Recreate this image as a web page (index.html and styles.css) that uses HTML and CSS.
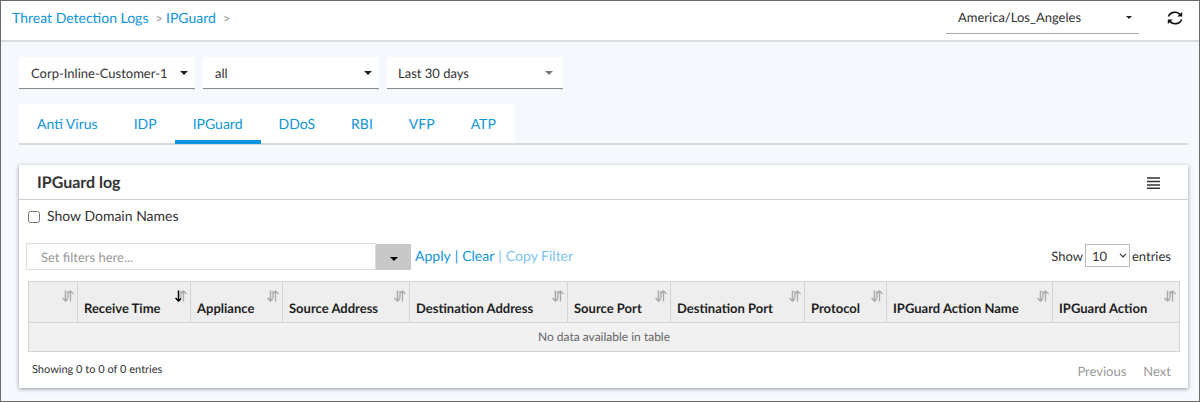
FILE: index.html
```html
<!DOCTYPE html>
<html lang="en">
<head>
<meta charset="utf-8">
<title>Threat Detection Logs - IPGuard</title>
<link rel="stylesheet" href="styles.css">
</head>
<body>
<svg class="sprite" aria-hidden="true">
  <symbol id="sort" viewBox="0 0 12 12">
    <path class="up" d="M8.5 11.5V1.5M6.5 3.2L8.5 1L11.5 4M6 1V8"/>
    <path class="down" d="M3.5 0.5V10.5M0.5 8L3.5 11L6 8.6"/>
  </symbol>
</svg>
<header class="topbar">
  <nav class="crumbs" aria-label="Breadcrumb">
    <a href="#">Threat Detection Logs</a><span class="sep">&gt;</span><a href="#">IPGuard</a><span class="sep last">&gt;</span>
  </nav>
  <div class="tools">
    <div class="pick zone"><select aria-label="Time zone"><option>America/Los_Angeles</option></select></div>
    <button class="refresh" type="button" aria-label="Refresh">
      <svg viewBox="0 0 16 16" width="16" height="16" fill="none" stroke="#111" stroke-width="1.6">
        <path d="M1.4 6.6A6.7 6 0 0 1 13.4 5"/><path d="M14.6 9.4A6.7 6 0 0 1 2.6 11"/>
        <path d="M15.2 2V6.6H10.2Z" fill="#111" stroke="none"/><path d="M0.8 14V9.4H5.8Z" fill="#111" stroke="none"/>
      </svg>
    </button>
  </div>
</header>
<main class="content">
  <div class="filters">
    <div class="pick"><select aria-label="Organization"><option>Corp-Inline-Customer-1</option></select></div>
    <div class="pick"><select aria-label="Appliance"><option>all</option></select></div>
    <div class="pick soft"><select aria-label="Time range"><option>Last 30 days</option></select></div>
  </div>
  <nav class="tabs" aria-label="Log types">
    <a href="#">Anti Virus</a><a href="#">IDP</a><a href="#" class="active" aria-current="page">IPGuard</a><a href="#">DDoS</a><a href="#">RBI</a><a href="#">VFP</a><a href="#">ATP</a>
  </nav>
  <section class="panel">
    <div class="panel-head">
      <h1>IPGuard log</h1>
      <button class="menu" type="button" aria-label="Menu">
        <svg viewBox="0 0 13 12" width="13" height="12" fill="none" stroke="#333" stroke-width="1.4"><path d="M0 1H13M0 4.5H13M0 8H13M0 11.3H13"/></svg>
      </button>
    </div>
    <div class="panel-body">
      <label class="domains"><input type="checkbox">Show Domain Names</label>
      <div class="toolbar">
        <input class="query" type="text" placeholder="Set filters here..." aria-label="Filters">
        <button class="drop" type="button" aria-label="Filter options"></button>
        <div class="actions"><a href="#">Apply</a><span>|</span><a href="#">Clear</a><span class="faded">|</span><a href="#" class="faded">Copy Filter</a></div>
        <label class="length">Show <span class="count"><select><option>10</option></select><svg viewBox="0 0 8 5" width="8" height="5" fill="none" stroke="#333" stroke-width="1.1"><path d="M1 0.8L4 3.9L7 0.8"/></svg></span> entries</label>
      </div>
      <table class="log">
        <colgroup><col class="c-pick"><col class="c-time"><col class="c-appl"><col class="c-src"><col class="c-dst"><col class="c-sport"><col class="c-dport"><col class="c-proto"><col class="c-name"><col class="c-act"></colgroup>
        <thead><tr>
          <th><div><svg><use href="#sort"/></svg><span></span></div></th>
          <th><div class="sorted"><svg><use href="#sort"/></svg><span>Receive Time</span></div></th>
          <th><div><svg><use href="#sort"/></svg><span>Appliance</span></div></th>
          <th><div><svg><use href="#sort"/></svg><span>Source Address</span></div></th>
          <th><div><svg><use href="#sort"/></svg><span>Destination Address</span></div></th>
          <th><div><svg><use href="#sort"/></svg><span>Source Port</span></div></th>
          <th><div><svg><use href="#sort"/></svg><span>Destination Port</span></div></th>
          <th><div><svg><use href="#sort"/></svg><span>Protocol</span></div></th>
          <th><div><svg><use href="#sort"/></svg><span>IPGuard Action Name</span></div></th>
          <th><div><svg><use href="#sort"/></svg><span>IPGuard Action</span></div></th>
        </tr></thead>
        <tbody><tr><td colspan="10">No data available in table</td></tr></tbody>
      </table>
      <div class="foot">
        <span>Showing 0 to 0 of 0 entries</span>
        <div class="pager"><button type="button">Previous</button><button type="button">Next</button></div>
      </div>
    </div>
  </section>
</main>
</body>
</html>
```

FILE: styles.css
```css
* { box-sizing: border-box; }
body {
  margin: 0;
  min-height: 100vh;
  border: 1px solid #6b6b6b;
  background: #f5f9fd;
  color: #333;
  font: 14px/20px Lato, "Liberation Sans", sans-serif;
  text-rendering: geometricPrecision;
}
select, input, button { text-rendering: inherit; }
a { color: #0d94dc; text-decoration: none; }
button { border: 0; padding: 0; background: none; font: inherit; }
.sprite { display: none; }

.topbar {
  display: flex;
  justify-content: space-between;
  height: 41px;
  padding: 0 16px 0 11px;
  border-bottom: 2px solid #dcdde0;
  background: #fff;
}
.crumbs { display: flex; align-items: center; font-size: 14px; padding-bottom: 5px; }
.sep { color: #999; font-size: 13px; padding: 0 3px 0 7px; }
.tools { display: flex; align-items: flex-start; gap: 28px; }
.refresh { display: flex; padding-top: 9px; }

.pick { display: grid; align-items: center; width: 176px; height: 32px; background: #fff; border-bottom: 1px solid #8c8c8c; }
.pick select {
  grid-area: 1 / 1;
  appearance: none;
  width: 100%;
  height: 31px;
  border: 0;
  padding: 0 12px;
  background: transparent;
  color: #333;
  font: 13px/20px Lato, "Liberation Sans", sans-serif;
}
.pick::after {
  content: "";
  grid-area: 1 / 1;
  justify-self: end;
  margin-right: 7px;
  border: 4px solid transparent;
  border-top-color: #222;
  border-bottom: 0;
  pointer-events: none;
}
.pick.soft::after { margin-right: 10px; border-top-color: #777; }
.pick.soft select { padding-left: 11px; }
.zone { width: 193px; height: 33px; border-bottom-color: #aaa; }
.zone::after { border-width: 3px; border-bottom: 0; }

.content { padding: 15px 11px 13px 18px; }
.filters { display: flex; gap: 8px; }
.tabs {
  display: flex;
  margin-top: 15px;
  height: 41px;
  border-bottom: 2px solid #d9dadc;
}
.tabs a { height: 39px; padding: 10px 18px; background: #fff; }
.tabs a.active { height: 40px; border-bottom: 4px solid #0d94dc; }

.panel { margin-top: 20px; background: #fff; box-shadow: 0 1px 4px rgba(0, 0, 0, 0.4); }
.panel-head {
  display: flex;
  align-items: center;
  justify-content: space-between;
  height: 35px;
  padding: 2px 28px 0 18px;
  border-bottom: 1px solid #cfcfcf;
}
h1 { margin: 0; font-size: 16px; line-height: 20px; font-weight: 700; }
.menu { display: flex; }
.panel-body { padding: 6px 9px 7px; }
.domains { display: flex; align-items: center; gap: 7px; }
.domains input { margin: 2px 0 0; width: 12px; height: 12px; }
.toolbar { display: flex; align-items: center; margin: 17px 0 11px -2px; }
.query {
  width: 350px;
  height: 27px;
  border: 1px solid #ddd;
  padding: 0 14px;
  font: 13px/20px Lato, "Liberation Sans", sans-serif;
}
.query::placeholder { color: #999; opacity: 1; }
.drop { display: grid; place-items: center; width: 35px; height: 26px; padding-top: 4px; background: #c8c8c8; }
.drop::after { content: ""; border: 4px solid transparent; border-top-color: #000; border-bottom: 0; }
.actions { display: flex; gap: 4px; padding: 0 0 2px 4px; color: #0d94dc; }
.actions .faded { color: #7cc3ec; }
.length { display: flex; align-items: center; gap: 2px; margin-left: auto; padding: 0 8px 2px 0; font-size: 13px; }
.count { display: grid; align-items: center; }
.count select {
  grid-area: 1 / 1;
  appearance: none;
  width: 45px;
  height: 23px;
  border: 1px solid #bbb;
  padding: 0 6px;
  background: #fff;
  color: #333;
  font: 13px/20px Lato, "Liberation Sans", sans-serif;
}
.count svg { grid-area: 1 / 1; justify-self: end; margin-right: 3px; pointer-events: none; }

.log { width: 100%; table-layout: fixed; border-collapse: collapse; }
.log th, .log td { border: 1px solid #d5d5d5; padding: 0; }
.log th { height: 41px; background: #eee; color: #1d1d1d; font-size: 13px; line-height: 16px; text-align: left; vertical-align: top; white-space: nowrap; }
.log th div { display: grid; grid-template-rows: 10px 16px; padding: 8px 3px 0 6px; }
.log th svg { justify-self: end; width: 12px; height: 12px; fill: none; stroke: #aaa; stroke-width: 1.3; }
.sorted { --down: #000; }
.down { stroke: var(--down, #aaa); stroke-width: 1.5; }
.log td { height: 29px; background: #f1f1f1; color: #666; font-size: 12px; text-align: center; }
.c-pick { width: 49px; }
.c-time { width: 113px; }
.c-appl { width: 92px; }
.c-src { width: 127px; }
.c-dst { width: 158px; }
.c-sport { width: 103px; }
.c-dport { width: 134px; }
.c-proto { width: 82px; }
.c-name { width: 166px; }
.c-act { width: 127px; }
.foot { display: flex; justify-content: space-between; padding: 9px 8px 0 4px; font-size: 11px; line-height: 18px; }
.pager { display: flex; gap: 17px; font-size: 13px; line-height: 20px; }
.pager button { color: #999; }
```
